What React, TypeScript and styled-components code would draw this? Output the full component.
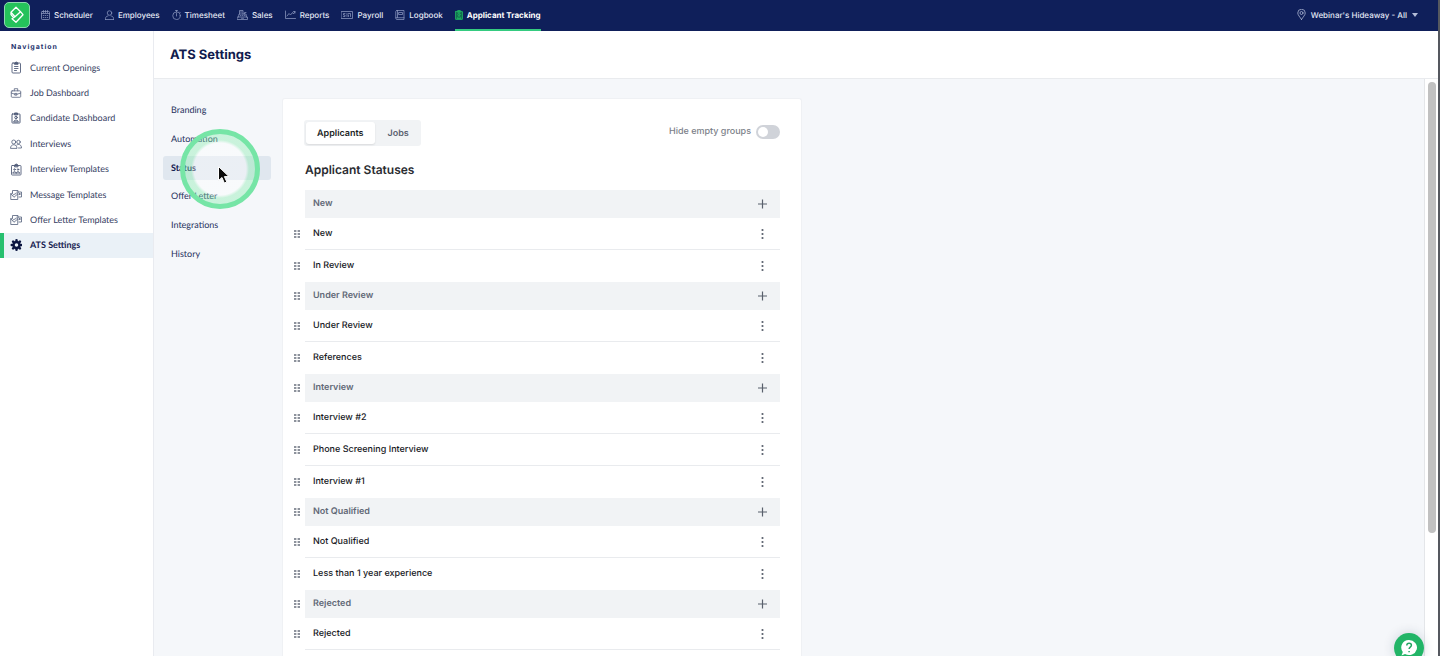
import React from "react";
import styled, { createGlobalStyle, css } from "styled-components";

const navy = "#0f1f5a";
const ink = "#14204f";
const green = "#27c06f";

const GlobalStyle = createGlobalStyle`
  *, *::before, *::after { box-sizing: border-box; }
  body {
    margin: 0;
    background: #f5f7fa;
    font-family: Inter, "Liberation Sans", sans-serif;
    text-rendering: geometricPrecision;
  }
  button, input { font: inherit; text-rendering: inherit; }
  ul { list-style: none; margin: 0; padding: 0; }
  a { color: inherit; text-decoration: none; }
`;

const Screen = styled.div`
  height: 100vh;
  display: flex;
  flex-direction: column;
  overflow: hidden;
  border-right: 2px solid #55585f;
`;

const TopBar = styled.header`
  flex: none;
  height: 31px;
  display: flex;
  align-items: stretch;
  background: ${navy};
  color: #e4e8f4;
  font-size: 8px;
  font-weight: 500;
  padding-left: 4px;
`;

const Logo = styled.a`
  display: flex;
  align-items: center;
  justify-content: center;
  width: 26px;
  height: 26px;
  margin-top: 2px;
  border-radius: 5px;
  background: #25c25b;
  border: 1px solid #8fd8b0;
`;

const MainNav = styled.nav`
  flex: 1;
  display: flex;
  gap: 12px;
  padding-left: 11px;
`;

const NavLink = styled.a<{ $active?: boolean }>`
  display: flex;
  align-items: center;
  gap: 4px;
  white-space: nowrap;
  border-bottom: 2px solid transparent;
  svg { color: #8d9ac0; }
  ${(p) => p.$active && css`
    color: #fff;
    font-weight: 700;
    border-bottom-color: #35cb80;
    svg { color: #1fae62; }
  `}
`;

const Location = styled.button`
  display: flex;
  align-items: center;
  gap: 5px;
  border: 0;
  padding: 0 20px 2px 0;
  background: none;
  color: inherit;
  font-weight: 500;
  white-space: nowrap;
  svg { color: #b4bdd8; }
`;

const Body = styled.div`
  flex: 1;
  min-height: 0;
  display: flex;
`;

const Sidebar = styled.aside`
  flex: none;
  width: 154px;
  background: #fff;
  border-right: 1px solid #e9ebf0;
  padding-top: 11px;
`;

const SidebarTitle = styled.h2`
  margin: 0 0 3px 11px;
  font-family: Inter, sans-serif;
  font-size: 7px;
  line-height: 10px;
  font-weight: 700;
  letter-spacing: 1px;
  color: #27356f;
`;

const SideNav = styled.nav`
  display: grid;
  grid-auto-rows: 1fr;
  height: 203px;
`;

const SideLink = styled.a<{ $active?: boolean }>`
  display: grid;
  grid-template-columns: 12px auto;
  justify-content: start;
  align-items: center;
  column-gap: 8px;
  padding-left: 6px;
  border-left: 4px solid transparent;
  font-family: Lato, sans-serif;
  font-size: 9px;
  line-height: 12px;
  color: #35405f;
  svg { color: #535f7b; }
  ${(p) => p.$active && css`
    background: #eaf1f7;
    border-left-color: ${green};
    color: ${ink};
    font-weight: 700;
    svg { color: #0b1540; }
  `}
`;

const Main = styled.main`
  flex: 1;
  min-width: 0;
  display: flex;
  flex-direction: column;
`;

const PageHeader = styled.div`
  flex: none;
  height: 48px;
  display: flex;
  align-items: center;
  padding-left: 16px;
  background: #fff;
  border-bottom: 1px solid #e9ebee;
`;

const PageTitle = styled.h1`
  margin: 0;
  font-size: 13px;
  line-height: 16px;
  font-weight: 700;
  color: #111b4e;
`;

const Scroller = styled.div`
  flex: 1;
  min-height: 0;
  display: flex;
`;

const Content = styled.div`
  flex: 1;
  min-width: 0;
  display: flex;
  align-items: flex-start;
  overflow: hidden;
  padding: 19px 0 0 9px;
  background: #f5f7fa;
`;

const Track = styled.div`
  flex: none;
  width: 14px;
  background: #fff;
  border-left: 1px solid #e4e6e9;
  padding: 3px 3px;
`;

const Thumb = styled.div`
  width: 8px;
  height: 79%;
  border-radius: 4px;
  background: #c1c1c1;
`;

const SettingsMenu = styled.nav`
  flex: none;
  width: 108px;
  height: 168px;
  margin-right: 11px;
  display: flex;
  flex-direction: column;
  justify-content: space-between;
`;

const SettingsLink = styled.a<{ $active?: boolean }>`
  height: 24px;
  display: flex;
  align-items: center;
  padding-left: 8px;
  border-radius: 3px;
  font-family: Lato, sans-serif;
  font-size: 9px;
  line-height: 12px;
  color: #26315d;
  ${(p) => p.$active && css`
    background: #e0e7ef;
    font-weight: 700;
    color: ${ink};
  `}
`;

const Card = styled.section`
  flex: none;
  align-self: stretch;
  width: 520px;
  padding: 21px 21px 0 10px;
  background: #fff;
  border: 1px solid #eff1f4;
  border-bottom: 0;
  border-radius: 3px 3px 0 0;
`;

const CardTop = styled.div`
  display: flex;
  justify-content: space-between;
  align-items: flex-start;
  padding-left: 11px;
`;

const Tabs = styled.div`
  display: flex;
  gap: 2px;
  padding: 2px;
  height: 26px;
  width: 117px;
  border-radius: 3px;
  background: #f1f3f5;
`;

const Tab = styled.button<{ $active?: boolean }>`
  border: 0;
  padding: 0 11px;
  border-radius: 3px;
  background: ${(p) => (p.$active ? "#fff" : "transparent")};
  box-shadow: ${(p) => (p.$active ? "0 1px 2px rgba(0,0,0,.1)" : "none")};
  color: ${(p) => (p.$active ? "#1c1f26" : "#5b6270")};
  font-size: 9px;
  font-weight: 600;
`;

const ToggleLabel = styled.label`
  display: flex;
  align-items: center;
  gap: 5px;
  padding-top: 5px;
  font-size: 9px;
  line-height: 14px;
  font-weight: 500;
  color: #7c8189;
`;

const Toggle = styled.input`
  appearance: none;
  width: 24px;
  height: 14px;
  margin: 0;
  padding: 2px;
  border-radius: 7px;
  background: #d0d3d9;
  &::before {
    content: "";
    display: block;
    width: 10px;
    height: 10px;
    border-radius: 50%;
    background: #fff;
  }
`;

const SectionTitle = styled.h2`
  margin: 16px 0 12px 12px;
  font-size: 12px;
  line-height: 16px;
  font-weight: 600;
  color: #2a2c31;
`;

const Line = styled.div`
  display: grid;
  grid-template-columns: 12px 1fr;
  align-items: center;
`;

const Handle = styled.button`
  display: flex;
  border: 0;
  padding: 0 0 0 1px;
  background: none;
  color: #8d929c;
`;

const LineBody = styled.div`
  grid-column: 2;
  display: flex;
  align-items: center;
  justify-content: space-between;
  font-size: 9px;
  line-height: 14px;
  font-weight: 500;
`;

const GroupHead = styled(LineBody)`
  height: 28px;
  padding: 0 11px 0 8px;
  background: #f1f3f5;
  font-weight: 600;
  color: #626977;
`;

const StatusRow = styled(LineBody)`
  height: 32px;
  padding: 0 11px 0 8px;
  color: #17191e;
  border-bottom: 1px solid #e9ebee;
`;

const Group = styled.section`
  &:not(:last-child) li:last-child ${StatusRow} { border-bottom-color: transparent; }
`;

const IconButton = styled.button`
  display: flex;
  border: 0;
  padding: 0;
  background: none;
  color: #59606c;
`;

const ClickRing = styled.div`
  position: absolute;
  left: 180px;
  top: 129px;
  width: 80px;
  height: 80px;
  border-radius: 50%;
  border: 5px solid #76e5a6;
  background: radial-gradient(circle, rgba(255, 255, 255, .35) 0 26px, rgba(130, 235, 170, .38) 29px);
  pointer-events: none;
`;

const Pointer = styled.svg`
  position: absolute;
  left: 217px;
  top: 165px;
  pointer-events: none;
`;

const HelpButton = styled.button`
  position: absolute;
  right: 16px;
  bottom: -7px;
  display: flex;
  align-items: center;
  justify-content: center;
  width: 30px;
  height: 30px;
  padding: 0;
  border: 0;
  border-radius: 50%;
  background: #22b567;
  box-shadow: 0 0 12px rgba(30, 50, 80, .18);
`;

const Viewport = styled.div`
  position: relative;
  overflow: hidden;
`;

type IconProps = { w?: number; h?: number; box?: string; sw?: number; children: React.ReactNode };
const Icon = ({ w = 12, h = 12, box = "0 0 24 24", sw = 1.8, children }: IconProps) => (
  <svg width={w} height={h} viewBox={box} fill="none" stroke="currentColor" strokeWidth={sw} strokeLinecap="round" strokeLinejoin="round" aria-hidden="true">
    {children}
  </svg>
);

const Calendar = () => (
  <Icon w={9} h={10} box="0 0 18 20" sw={1.5}>
    <rect x="1" y="3" width="16" height="16" rx="1.5" /><path d="M1 7h16M5 1v4M9 1v4M13 1v4M4.500 11h1M8.500 11h1M12.500 11h1M4.500 15h1M8.500 15h1M12.500 15h1" />
  </Icon>
);
const Person = () => (
  <Icon w={9} h={10} box="0 0 18 20" sw={1.5}>
    <circle cx="9" cy="6" r="4.500" /><path d="M1 19v-2c0-3 2-4.500 5-5.200M17 19v-2c0-3-2-4.500-5-5.200M1 19h16" />
  </Icon>
);
const Stopwatch = () => (
  <Icon w={9} h={10} box="0 0 18 20" sw={1.5}>
    <circle cx="9" cy="11.500" r="7.500" /><path d="M9 7v5M7 1h4M9 1v3M15 4l1.500 1.500" />
  </Icon>
);
const Register = () => (
  <Icon w={11} h={10} box="0 0 22 20" sw={1.5}>
    <path d="M1 14h20v5H1zM3 14l1-6h14l1 6M5 8V1h7v7M7 4h3M15 8V5h3M7 11h1M11 11h1M15 11h1M9 16.500h4" />
  </Icon>
);
const Chart = () => (
  <Icon w={11} h={10} box="0 0 22 20" sw={1.5}>
    <path d="M1 2v15h20M4 12l4-5 3 3 4-5 2 3 3-5M17 3h3v3" />
  </Icon>
);
const Money = () => (
  <Icon w={12} h={10} box="0 0 24 20" sw={1.5}>
    <rect x="1" y="3" width="22" height="14" /><path d="M8 7H5v3h3v3H5M12 7v6M15 7h4v6M15 10v3" />
  </Icon>
);
const Book = () => (
  <Icon w={10} h={10} box="0 0 20 20" sw={1.5}>
    <path d="M4 1h14v18H4c-1.500 0-2.500-1-2.500-2.500v-13C1.500 2 2.500 1 4 1zM2 15.500h16M5 1v14M8 5h7v4H8z" />
  </Icon>
);
const Badge = ({ filled }: { filled?: boolean }) => (
  <Icon w={filled ? 8 : 12} h={filled ? 10 : 13} box={filled ? "0 0 18 22" : "-3 0 24 24"} sw={2}>
    <rect x="1" y="3" width="16" height="18" rx="1" fill={filled ? "#12704f" : "none"} /><path d="M6 4V1h6v3z" fill="currentColor" />
    <circle cx="9" cy="10" r="2.500" /><path d="M4.500 18c0-4 9-4 9 0z" />
  </Icon>
);
const Clipboard = () => (
  <Icon h={13} box="-3 0 24 24">
    <rect x="1" y="3" width="17" height="20" rx="2" /><path d="M6 5V3l3.500-2L13 3v2z" fill="currentColor" /><path d="M6 10h7M6 14h7M6 18h4" />
  </Icon>
);
const Briefcase = () => (
  <Icon box="-2 -2 28 28">
    <rect x="1" y="7" width="22" height="15" rx="2" /><path d="M8 7V2h8v5M1 12l9 3M23 12l-9 3M10 13h4v4h-4z" />
  </Icon>
);
const People = () => (
  <Icon sw={1.6}>
    <circle cx="7.500" cy="8" r="4" /><circle cx="17" cy="8" r="3.500" /><path d="M1 20c0-9 13-9 13 0zM13.500 14c4-3 9.500-.5 9.500 6h-6" />
  </Icon>
);
const TeamBoard = () => (
  <Icon h={13} box="-2 0 24 24">
    <rect x="1" y="4" width="19" height="19" rx="1.500" /><path d="M7 6V3l3.500-2L14 3v3z" fill="currentColor" />
    <circle cx="7" cy="12" r="1.500" /><circle cx="14" cy="12" r="1.500" /><path d="M4 19c0-4 6-4 6 0M11 19c0-4 6-4 6 0M4 19h13" />
  </Icon>
);
const Mail = () => (
  <Icon sw={1.6}>
    <path d="M5 9V3h11v5M1.500 10l2-2M1.500 10v11h14V10l-7 6zM15.500 10l-2-2M14 6h9v10h-5M19 9h1.500v2H19zM6 12l6-3" />
  </Icon>
);
const Gear = () => (
  <Icon box="-13 -12 24 24" sw={5}>
    <circle r="6" /><path d="M0-9v-.5M0 9v.5M-9 0h-.5M9 0h.5M-6.500-6.500l-.3-.3M6.500-6.500l.3-.3M-6.500 6.500l-.3.3M6.500 6.500l.3.3" />
  </Icon>
);
const Pin = () => (
  <Icon w={9} h={11} box="0 0 18 22" sw={1.5}>
    <path d="M9 21C6 16 1.500 12 1.500 8a7.500 7.500 0 0 1 15 0C16.500 12 12 16 9 21z" /><circle cx="9" cy="8" r="3" />
  </Icon>
);
const Caret = () => (
  <svg width="6" height="4" viewBox="0 0 6 4" aria-hidden="true"><path d="M0 0h6L3 4z" fill="currentColor" /></svg>
);
const Plus = () => (
  <svg width="13" height="12" viewBox="0 0 13 12" stroke="currentColor" strokeWidth="1.200" aria-hidden="true"><path d="M2 6h9M6.500 1.500v9" /></svg>
);
const Kebab = () => (
  <svg width="13" height="12" viewBox="0 0 13 12" fill="currentColor" aria-hidden="true">
    {[2, 6, 10].map((y) => <circle key={y} cx="6.500" cy={y} r="1.100" />)}
  </svg>
);
const Dots = () => (
  <svg width="6" height="8" viewBox="0 0 6 8" fill="currentColor" aria-hidden="true">
    {[0, 3, 6].map((y) => <path key={y} d={`M0 ${y}h2.400v2H0zM3.600 ${y}H6v2H3.600z`} />)}
  </svg>
);

const topLinks = [
  { label: "Scheduler", icon: <Calendar /> },
  { label: "Employees", icon: <Person /> },
  { label: "Timesheet", icon: <Stopwatch /> },
  { label: "Sales", icon: <Register /> },
  { label: "Reports", icon: <Chart /> },
  { label: "Payroll", icon: <Money /> },
  { label: "Logbook", icon: <Book /> },
  { label: "Applicant Tracking", icon: <Badge filled />, active: true },
];

const sideLinks = [
  { label: "Current Openings", icon: <Clipboard /> },
  { label: "Job Dashboard", icon: <Briefcase /> },
  { label: "Candidate Dashboard", icon: <Badge /> },
  { label: "Interviews", icon: <People /> },
  { label: "Interview Templates", icon: <TeamBoard /> },
  { label: "Message Templates", icon: <Mail /> },
  { label: "Offer Letter Templates", icon: <Mail /> },
  { label: "ATS Settings", icon: <Gear />, active: true },
];

const settings = ["Branding", "Automation", "Status", "Offer Letter", "Integrations", "History"];

const groups = [
  { name: "New", items: ["New", "In Review"] },
  { name: "Under Review", items: ["Under Review", "References"] },
  { name: "Interview", items: ["Interview #2", "Phone Screening Interview", "Interview #1"] },
  { name: "Not Qualified", items: ["Not Qualified", "Less than 1 year experience"] },
  { name: "Rejected", items: ["Rejected"] },
];

export default function App() {
  return (
    <Viewport>
      <GlobalStyle />
      <Screen>
        <TopBar>
          <Logo href="#" aria-label="Home">
            <svg width="16" height="18" viewBox="0 0 16 18" fill="none" stroke="#fff" strokeWidth="1.300" strokeLinejoin="round" aria-hidden="true">
              <path d="M7 1.200L2 6.300l4 4.400 5.500-5zM11.500 5.700L14 8.700 7 16.300 3 12.700l3-2M2 6.300v2.400l2.500 3" />
            </svg>
          </Logo>
          <MainNav aria-label="Main">
            {topLinks.map((l) => (
              <NavLink key={l.label} href="#" $active={l.active}>{l.icon}{l.label}</NavLink>
            ))}
          </MainNav>
          <Location type="button"><Pin />Webinar's Hideaway - All<Caret /></Location>
        </TopBar>
        <Body>
          <Sidebar>
            <SidebarTitle>Navigation</SidebarTitle>
            <SideNav aria-label="Applicant tracking">
              {sideLinks.map((l) => (
                <SideLink key={l.label} href="#" $active={l.active}>{l.icon}{l.label}</SideLink>
              ))}
            </SideNav>
          </Sidebar>
          <Main>
            <PageHeader><PageTitle>ATS Settings</PageTitle></PageHeader>
            <Scroller>
              <Content>
                <SettingsMenu aria-label="Settings">
                  {settings.map((s) => (
                    <SettingsLink key={s} href="#" $active={s === "Status"}>{s}</SettingsLink>
                  ))}
                </SettingsMenu>
                <Card>
                  <CardTop>
                    <Tabs role="tablist">
                      <Tab type="button" role="tab" aria-selected="true" $active>Applicants</Tab>
                      <Tab type="button" role="tab" aria-selected="false">Jobs</Tab>
                    </Tabs>
                    <ToggleLabel>Hide empty groups<Toggle type="checkbox" role="switch" /></ToggleLabel>
                  </CardTop>
                  <SectionTitle>Applicant Statuses</SectionTitle>
                  {groups.map((g, i) => (
                    <Group key={g.name}>
                      <Line>
                        {i > 0 && <Handle type="button" aria-label="Move group"><Dots /></Handle>}
                        <GroupHead>{g.name}<IconButton type="button" aria-label="Add status"><Plus /></IconButton></GroupHead>
                      </Line>
                      <ul>
                        {g.items.map((item) => (
                          <li key={item}>
                            <Line>
                              <Handle type="button" aria-label="Move status"><Dots /></Handle>
                              <StatusRow>{item}<IconButton type="button" aria-label="Status options"><Kebab /></IconButton></StatusRow>
                            </Line>
                          </li>
                        ))}
                      </ul>
                    </Group>
                  ))}
                </Card>
              </Content>
              <Track><Thumb /></Track>
            </Scroller>
          </Main>
        </Body>
      </Screen>
      <ClickRing />
      <Pointer width="13" height="20" viewBox="0 0 13 20" aria-hidden="true">
        <path d="M1.500 1.500v14l3.500-3 2.300 5.500 2.500-1-2.400-5.400h4.600z" fill="#0b0b0b" stroke="#fff" strokeWidth="1" />
      </Pointer>
      <HelpButton type="button" aria-label="Help">
        <svg width="18" height="18" viewBox="0 0 18 18" aria-hidden="true">
          <path d="M9 1a8 7.500 0 1 1-4 14l-3.500 1.500L2.800 13A7.500 7.500 0 0 1 9 1z" fill="#fff" />
          <path d="M6.800 6.500c0-3 4.600-2.800 4.600-.2 0 1.900-2.300 1.700-2.300 3.700M9.100 12v1.200" fill="none" stroke="#22a562" strokeWidth="1.500" />
        </svg>
      </HelpButton>
    </Viewport>
  );
}
